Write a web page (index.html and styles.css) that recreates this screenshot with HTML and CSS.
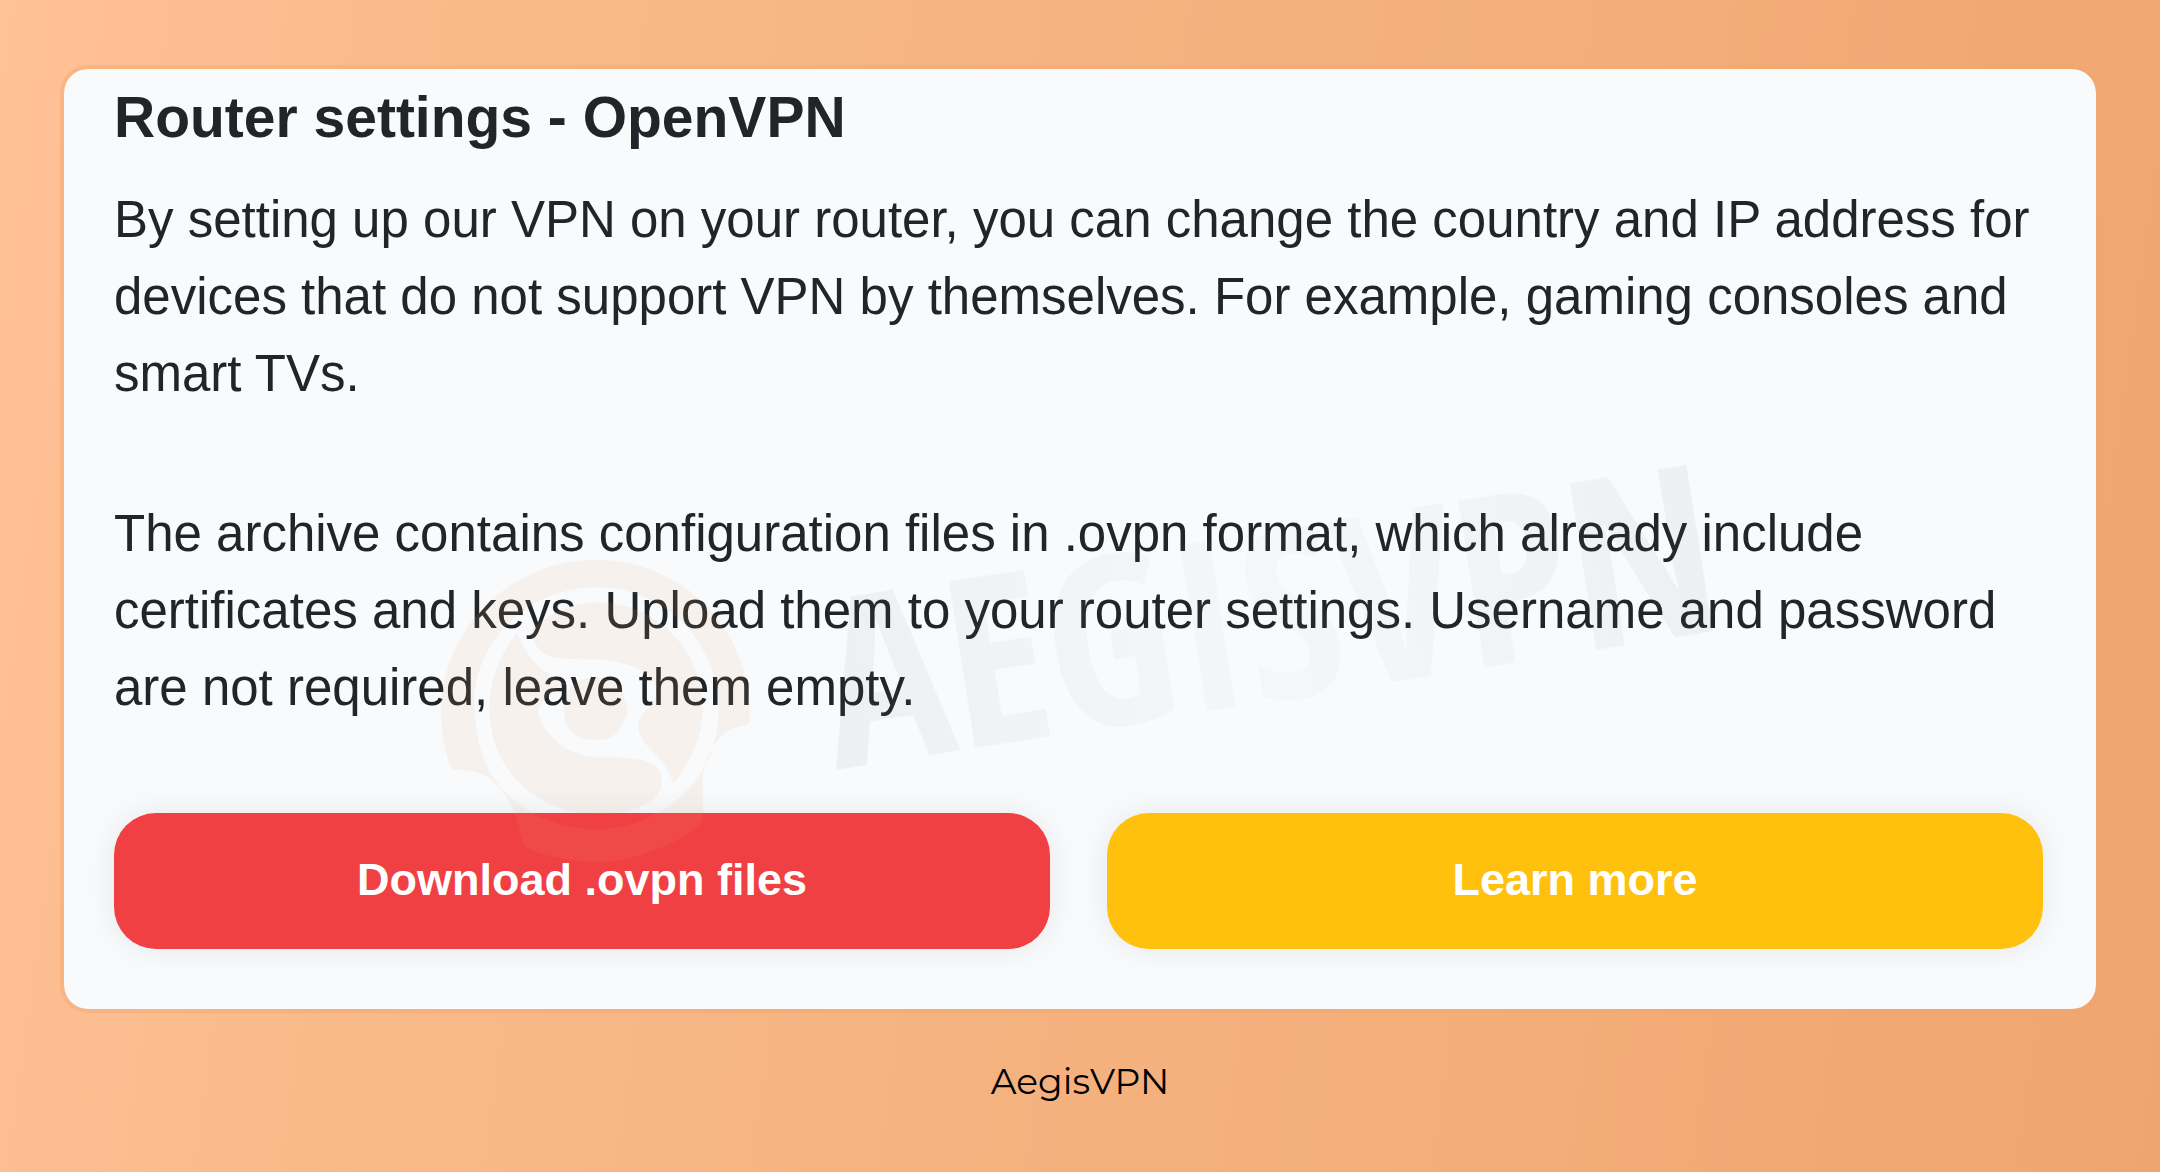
FILE: index.html
```html
<!DOCTYPE html>
<html lang="en">
<head>
<meta charset="utf-8">
<meta name="viewport" content="width=device-width, initial-scale=1">
<title>Router settings - OpenVPN</title>
<link rel="stylesheet" href="styles.css">
</head>
<body>
<main class="card">
  <h1 class="card-title">Router settings - OpenVPN</h1>
  <p class="card-text">By setting up our VPN on your router, you can change the country and IP address for devices that do not support VPN by themselves. For example, gaming consoles and smart TVs.</p>
  <p class="card-text">The archive contains configuration files in .ovpn format, which already include certificates and keys. Upload them to your router settings. Username and password are not required, leave them empty.</p>
  <div class="actions">
    <button type="button" class="btn btn-download">Download .ovpn files</button>
    <button type="button" class="btn btn-learn">Learn more</button>
  </div>
  <svg class="watermark" viewBox="64 69 2032 940" aria-hidden="true">
    <defs>
      <linearGradient id="ink" x1="0" x2="1" y1="0" y2="0">
        <stop offset="0" stop-color="#5c6058" stop-opacity=".07"/>
        <stop offset=".5" stop-color="#9a9c9c" stop-opacity=".04"/>
        <stop offset="1" stop-color="#5c6060" stop-opacity=".07"/>
      </linearGradient>
    </defs>
    <!-- helmet emblem -->
    <g transform="translate(400 520) scale(.33333)" fill="#f0aa6c" fill-opacity=".1" fill-rule="evenodd">
      <path d="M155 750C132 690 123 635 123 580C123 320 335 120 590 120C845 120 1050 325 1050 580L1048 606C1044 616 1036 615 1020 618C950 635 905 720 908 800L910 880C908 910 895 920 870 937C780 994 680 1027 580 1027C500 1023 430 1008 385 985C355 965 360 920 342 875C300 770 230 745 155 750ZM590 202C385 202 222 365 222 550C228 640 235 690 270 755C330 860 450 927 590 927C720 927 840 855 905 755C940 700 955 640 955 565C955 365 790 202 590 202Z"/>
      <path d="M352 340C300 400 268 480 268 565C268 740 400 883 600 883C690 880 785 850 785 785C785 715 710 712 600 712C505 710 440 655 413 580C420 535 470 510 500 490C430 465 385 420 352 340Z"/>
      <path d="M388 335C440 280 520 247 590 247C770 247 908 390 908 565C908 650 870 730 820 792C795 700 715 680 715 620C715 575 770 560 770 510C760 450 670 418 560 418C450 414 420 418 388 335Z"/>
      <path d="M525 490C560 465 640 465 665 505C672 540 685 555 683 580C660 640 635 662 590 660C520 660 492 625 492 570C492 535 505 505 525 490Z"/>
    </g>
    <text class="wordmark" x="836" y="770" transform="rotate(-9 836 770)" fill="url(#ink)">AEGISVPN</text>
  </svg>
</main>
<footer class="caption">AegisVPN</footer>
</body>
</html>
```
FILE: styles.css
```css
* {
  box-sizing: border-box;
}

body {
  margin: 0;
  min-height: 100vh;
  padding: 65px 60px 40px;
  background: linear-gradient(98deg, #ffc196 0%, #f9ba8a 20%, #f5b381 46%, #f3ad78 72%, #efa56f 100%);
  color: #212529;
  font-family: "Liberation Sans", Arial, sans-serif;
}

.card {
  position: relative;
  padding: 14px 53px 60px 50px;
  border: 4px solid rgba(243, 165, 110, .4);
  border-radius: 28px;
  background: #f8fafc;
  background-clip: padding-box;
}

.card-title {
  margin: 0 0 30px;
  font-size: 57px;
  line-height: 68px;
  font-weight: 700;
}

.card-text {
  margin: 0 0 83px;
  font-size: 51px;
  line-height: 77px;
}

.actions {
  display: grid;
  grid-template-columns: 1fr 1fr;
  gap: 57px;
  margin-top: 87px;
}

.btn {
  height: 136px;
  padding: 0 24px 2px;
  border: 0;
  border-radius: 42px;
  color: #fff;
  font: 700 45px/60px "Liberation Sans", Arial, sans-serif;
  box-shadow: 0 0 32px rgba(0, 0, 0, .08);
  cursor: pointer;
}

.btn-download {
  background: #f04043;
}

.btn-learn {
  background: #ffc10d;
}

.watermark {
  position: absolute;
  inset: 0;
  width: 100%;
  height: 100%;
  pointer-events: none;
}

.wordmark {
  font: 700 236px "Liberation Sans Narrow", "Open Sans Condensed", "Roboto Condensed", Roboto, sans-serif;
}

.caption {
  margin-top: 46px;
  color: #000;
  font: 400 36px/44px Montserrat, Inter, sans-serif;
  text-align: center;
}
```
